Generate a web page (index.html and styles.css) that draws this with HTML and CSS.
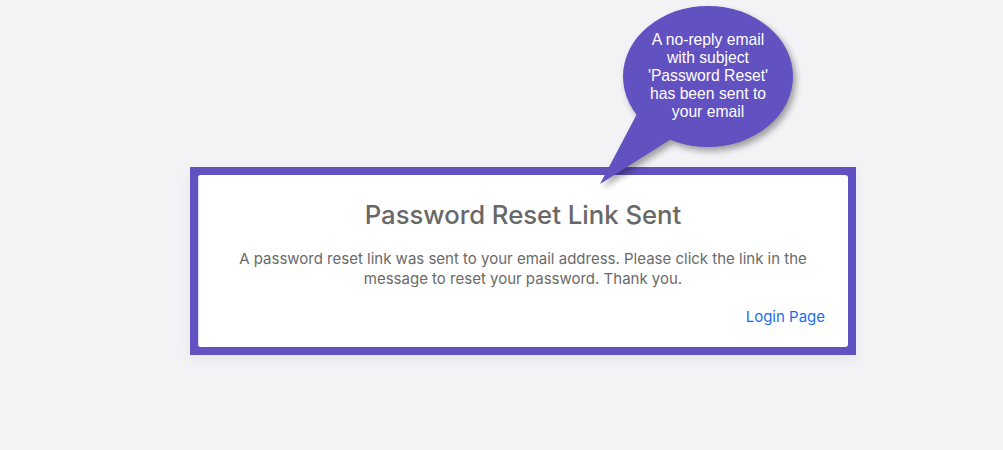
FILE: index.html
```html
<!DOCTYPE html>
<html lang="en">
<head>
<meta charset="utf-8">
<title>Password Reset Link Sent</title>
<link rel="stylesheet" href="styles.css">
</head>
<body>
<main class="page">
  <section class="frame">
    <div class="card">
      <h1 class="title">Password Reset Link Sent</h1>
      <p class="message">A password reset link was sent to your email address. Please click the link in the message to reset your password. Thank you.</p>
      <div class="actions"><a class="login" href="#">Login Page</a></div>
    </div>
  </section>
</main>
<div class="bubble">
  <svg class="bubble-shape" width="210" height="190" viewBox="0 0 210 190" aria-hidden="true">
    <ellipse cx="118" cy="76.5" rx="85" ry="70.5" fill="#6251c1"/>
    <polygon points="48,112 10,184 86,136" fill="#6251c1"/>
  </svg>
  <p class="bubble-text">A no-reply email<br>with subject<br>'Password Reset'<br>has been sent to<br>your email</p>
</div>
</body>
</html>
```
FILE: styles.css
```css
html, body {
  margin: 0;
  padding: 0;
}
body {
  background: #f3f3f6;
  width: 1003px;
  height: 450px;
  overflow: hidden;
  font-family: Inter, "Noto Sans", sans-serif;
}
.page {
  padding: 167px 0 0 190px;
}
.frame {
  width: 650px;
  border: 8px solid #6251c1;
  background: #6251c1;
  box-shadow: 0 4px 12px rgba(90, 90, 120, 0.08);
}
.card {
  background: #fff;
  border-radius: 3px;
  box-shadow: inset 1px 0 0 #dcd8ef;
  padding: 25px 23px 18px 23px;
  height: 129px;
}
.title {
  margin: 0;
  text-align: center;
  font-size: 25.7px;
  font-weight: 500;
  line-height: 30px;
  color: #686868;
}
.message {
  margin: 19px 0 0;
  padding: 0 8px;
  text-align: center;
  font-size: 15px;
  line-height: 20px;
  color: #6a6a6a;
}
.actions {
  display: flex;
  justify-content: flex-end;
  margin-top: 18px;
}
.login {
  color: #1a6ef5;
  text-decoration: none;
  font-size: 15px;
  line-height: 20px;
}
.bubble {
  position: absolute;
  left: 590px;
  top: 0;
  width: 210px;
  height: 190px;
}
.bubble-shape {
  display: block;
  filter: drop-shadow(3px 4px 3px rgba(0, 0, 0, 0.35));
}
.bubble-text {
  position: absolute;
  left: 28px;
  top: 31px;
  width: 180px;
  margin: 0;
  text-align: center;
  font-family: "Liberation Sans", Arial, sans-serif;
  font-size: 15.7px;
  line-height: 18px;
  color: #fff;
}
```
